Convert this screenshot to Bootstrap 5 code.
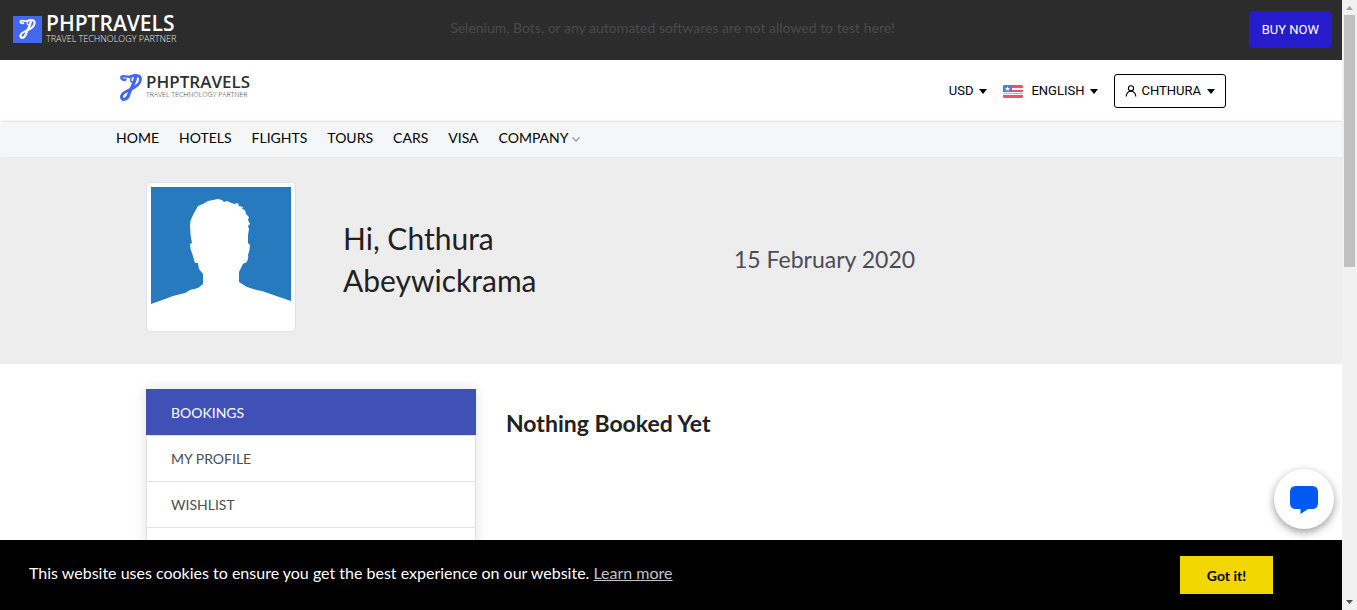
<!DOCTYPE html>
<html lang="en">
<head>
<meta charset="utf-8">
<meta name="viewport" content="width=device-width, initial-scale=1">
<title>PHPTRAVELS | My Account</title>
<link href="https://cdn.jsdelivr.net/npm/bootstrap@5.3.0/dist/css/bootstrap.min.css" rel="stylesheet">
<style>
body { font-family: Lato, "Open Sans", sans-serif; font-size: 14px; color: #212529; overflow: hidden; padding-right: 15px; }
a { text-decoration: none; }
.wrap { max-width: 1140px; padding: 0 15px; margin: 0 auto; }
.promo { background: #2c2c2c; height: 60px; padding: 0 10px 2px 13px; }
.promo-note { color: #4a4a4a; line-height: 18px; padding-bottom: 2px; }
.side { flex: 1 1 0; }
.buy { background: #271ccb; color: #fff; font: 13px/20px Roboto, sans-serif; border: 0; border-radius: 4px; padding: 9px 13px 8px; }
.buy:hover { background: #1f16a8; color: #fff; }
.brand-name { font: 600 21px/20px "Open Sans", sans-serif; display: block; }
.brand-tag { font: 300 9px/12px "Open Sans", sans-serif; display: block; white-space: nowrap; }
.brand-box { background: #4368ee; width: 29px; height: 27px; color: #fff; }
.promo .brand-name { color: #fff; }
.promo .brand-tag { color: #e8e8e8; }
.masthead { height: 62px; }
.masthead .brand { color: #4368ee; }
.masthead .brand-name { font-size: 17px; line-height: 16px; color: #2f2f33; }
.masthead .brand-tag { font-size: 7px; line-height: 10px; color: #333; }
.masthead button { font: 13px/20px Roboto, sans-serif; color: #000; background: none; border: 0; padding: 0; display: flex; align-items: center; }
.masthead button.account { border: 1px solid #000; border-radius: 3px; height: 34px; padding: 0 10px; }
.masthead button::after { content: ""; border: 4px solid transparent; border-top: 5px solid #000; border-bottom: 0; margin-left: 6px; }
.menu-bar { background: #f4f6f8; box-shadow: 0 -1px 2px rgba(0,0,0,.12); position: relative; height: 35px; }
.menu-bar .wrap { gap: 20px; }
.menu-bar a { color: #000; line-height: 32px; }
.hero { background: #ededed; height: 207px; }
.hero-grid { display: grid; grid-template-columns: 150px 344px 1fr; gap: 47px; padding: 25px 30px 0; }
.avatar { width: 150px; height: 150px; padding: 4px; background: #fff; border: 1px solid #dee2e6; border-radius: 4px; }
.hero h2 { font-size: 30px; line-height: 42px; margin: 0; color: #212121; font-weight: 400; }
.hero time { font-size: 23px; line-height: 30px; color: #4c4c57; }
.account-grid { display: grid; grid-template-columns: 330px 1fr; gap: 30px; padding: 25px 30px 0; }
.account-menu { box-shadow: 0 0 12px rgba(0,0,0,.12); border-radius: 0; }
.account-menu a.list-group-item { color: #4c4c57; border: 1px solid #e1e1e1; border-bottom: 0; padding: 12px 24px; line-height: 21px; background: #fff; border-radius: 0; }
.account-menu a.list-group-item.active { background: #3f51b5; border-color: #3f51b5; color: #fff; margin: 0; }
.empty-title { font-size: 23px; line-height: 30px; font-weight: 700; color: #212121; margin: 19px 0 0; }
.cookie { background: #000; left: 0; right: 15px; bottom: 0; height: 70px; padding: 0 69px 0 29px; color: #fff; font-size: 16px; }
.cookie a { color: #c4c4c4; text-decoration: underline; }
.cookie button { background: #f1d600; border: 0; color: #000; font-weight: 700; font-size: 14px; width: 93px; height: 38px; }
.chat { right: 23px; bottom: 81px; width: 60px; height: 60px; border: 0; border-radius: 50%; background: #fff; box-shadow: 0 3px 9px rgba(0,0,0,.4); padding: 2px 0 0; }
.scroll-rail { right: 0; top: 0; bottom: 0; width: 15px; background: #f1f1f1; padding: 6px 0; }
.scroll-thumb { background: #c1c1c1; width: 11px; height: 252px; margin: 5px 0 auto; }
</style>
</head>
<body>
<svg class="d-none" xmlns="http://www.w3.org/2000/svg">
  <symbol id="ribbon" viewBox="0 0 22 27">
    <g fill="none" stroke="currentColor" stroke-linecap="round" stroke-linejoin="round">
      <path stroke-width="2.400" d="M5.500 5.500C2.500 6.500 .9 4.500 1.500 3C3 .8 6.500 3.800 11 2.500"/>
      <path stroke-width="2.800" d="M11 2.500C15 .8 20.800 .6 20.500 5.500C20.200 11 14 14 9 16C4.500 18 .9 20.500 1.600 23.500"/>
      <path stroke-width="3.200" d="M1.700 23.500C2.500 27 7.500 25.500 9 20C10 15 14.500 10.500 15.500 3.500"/>
      <path stroke-width="1.600" d="M11 4.500C9.500 7 11.500 8.500 13.500 7.500"/>
    </g>
  </symbol>
</svg>

<header>
  <div class="promo d-flex align-items-center">
    <div class="side">
      <a href="#" class="d-inline-flex align-items-center">
        <span class="brand-box d-flex align-items-center justify-content-center"><svg width="17" height="20"><use href="#ribbon"/></svg></span>
        <span class="ms-1"><span class="brand-name">PHPTRAVELS</span><span class="brand-tag">TRAVEL TECHNOLOGY PARTNER</span></span>
      </a>
    </div>
    <div class="promo-note">Selenium, Bots, or any automated softwares are not allowed to test here!</div>
    <div class="side text-end"><button type="button" class="btn buy">BUY NOW</button></div>
  </div>

  <div class="masthead">
    <div class="wrap h-100 d-flex align-items-center justify-content-between">
      <a href="#" class="brand d-flex align-items-center ms-1 pb-2">
        <svg width="22" height="27"><use href="#ribbon"/></svg>
        <span class="ms-1"><span class="brand-name">PHPTRAVELS</span><span class="brand-tag">TRAVEL TECHNOLOGY PARTNER</span></span>
      </a>
      <div class="d-flex align-items-center gap-3">
        <button type="button">USD</button>
        <button type="button">
          <svg class="me-2" width="20" height="13" viewBox="0 0 20 13" aria-hidden="true">
            <clipPath id="flagClip"><rect width="20" height="13" rx="1.500"/></clipPath>
            <g clip-path="url(#flagClip)"><path fill="#f5f5f5" d="M0 0h20v13H0z"/><path fill="#f0506a" d="M0 0h20v3H0zM0 5h20v2H0zM0 10h20V13H0z"/><path fill="#f7a0ae" d="M0 8h20v1H0z"/><path fill="#4a80d9" d="M0 0h9v7H0z"/><path fill="#fff" d="M4.500 1.500l.7 1.600 1.800.1-1.400 1.100.5 1.700-1.600-1-1.600 1 .5-1.700L2 3.200l1.800-.1z"/></g>
          </svg>ENGLISH</button>
        <button type="button" class="account">
          <svg class="me-1" width="12" height="12" viewBox="0 0 12 12" fill="none" stroke="#000" stroke-width="1.100" aria-hidden="true"><circle cx="6" cy="3.300" r="2.600"/><path d="M1.200 11.500C1.500 8 3.500 6.300 6 6.300S10.500 8 10.800 11.500"/></svg>CHTHURA</button>
      </div>
    </div>
  </div>

  <nav class="menu-bar">
    <div class="wrap d-flex">
      <a href="#">HOME</a>
      <a href="#">HOTELS</a>
      <a href="#">FLIGHTS</a>
      <a href="#">TOURS</a>
      <a href="#">CARS</a>
      <a href="#">VISA</a>
      <a href="#">COMPANY <svg width="8" height="5" viewBox="0 0 8 5" fill="none" stroke="#999" stroke-width="1.300" aria-hidden="true"><path d="M.5.5L4 4 7.500.5"/></svg></a>
    </div>
  </nav>
</header>

<main>
  <section class="hero">
    <div class="wrap">
      <div class="hero-grid">
        <div class="avatar">
          <svg class="d-block" width="140" height="140" viewBox="0 0 140 140" role="img" aria-label="Profile photo">
            <path fill="#267abd" d="M0 0H140V114Q125 109 111 104Q101 102 96 100L88 95V85L92 77Q94 75 95 76Q98 71 97 68Q99 63 99 58L97 56V48L98 42L97 39L99 37L97 33L98 30L95 27L94 23L91 22L92 20L88 19L87 16L83 17L76 14L73 15L71 13L67 12L57 14L52 17L47 19L42 28Q39 33 39 38Q39 48 41 56L39 57Q39 62 41 66L44 76H47L48 82L52 87V97L47 101L39 103L34 106L22 109L14 112L0 117Z"/>
          </svg>
        </div>
        <h2 class="align-self-center mt-1">Hi, Chthura<br>Abeywickrama</h2>
        <time class="align-self-center mt-1" datetime="2020-02-15">15 February 2020</time>
      </div>
    </div>
  </section>

  <section class="wrap">
    <div class="account-grid">
      <nav class="account-menu list-group">
        <a href="#" class="list-group-item active">BOOKINGS</a>
        <a href="#" class="list-group-item">MY PROFILE</a>
        <a href="#" class="list-group-item">WISHLIST</a>
        <a href="#" class="list-group-item">NEWSLETTER</a>
      </nav>
      <h3 class="empty-title">Nothing Booked Yet</h3>
    </div>
  </section>
</main>

<button type="button" class="chat position-fixed d-flex align-items-center justify-content-center" aria-label="Open chat">
  <svg width="28" height="28" viewBox="0 0 28 28"><path fill="#0059f0" d="M6 0H22Q28 0 28 6V17Q28 23 22 23H18L10.500 28V23H6Q0 23 0 17V6Q0 0 6 0Z"/></svg>
</button>

<div class="cookie position-fixed d-flex align-items-center justify-content-between" role="dialog" aria-label="Cookie notice">
  <div class="pb-1">This website uses cookies to ensure you get the best experience on our website. <a href="#">Learn more</a></div>
  <button type="button">Got it!</button>
</div>

<div class="scroll-rail position-fixed d-flex flex-column align-items-center" aria-hidden="true">
  <svg width="7" height="4"><path fill="#a3a3a3" d="M3.500 0L7 4H0z"/></svg>
  <div class="scroll-thumb"></div>
  <svg width="7" height="4"><path fill="#505050" d="M0 0H7L3.500 4z"/></svg>
</div>
<script src="https://cdn.jsdelivr.net/npm/bootstrap@5.3.0/dist/js/bootstrap.bundle.min.js"></script>
</body>
</html>
